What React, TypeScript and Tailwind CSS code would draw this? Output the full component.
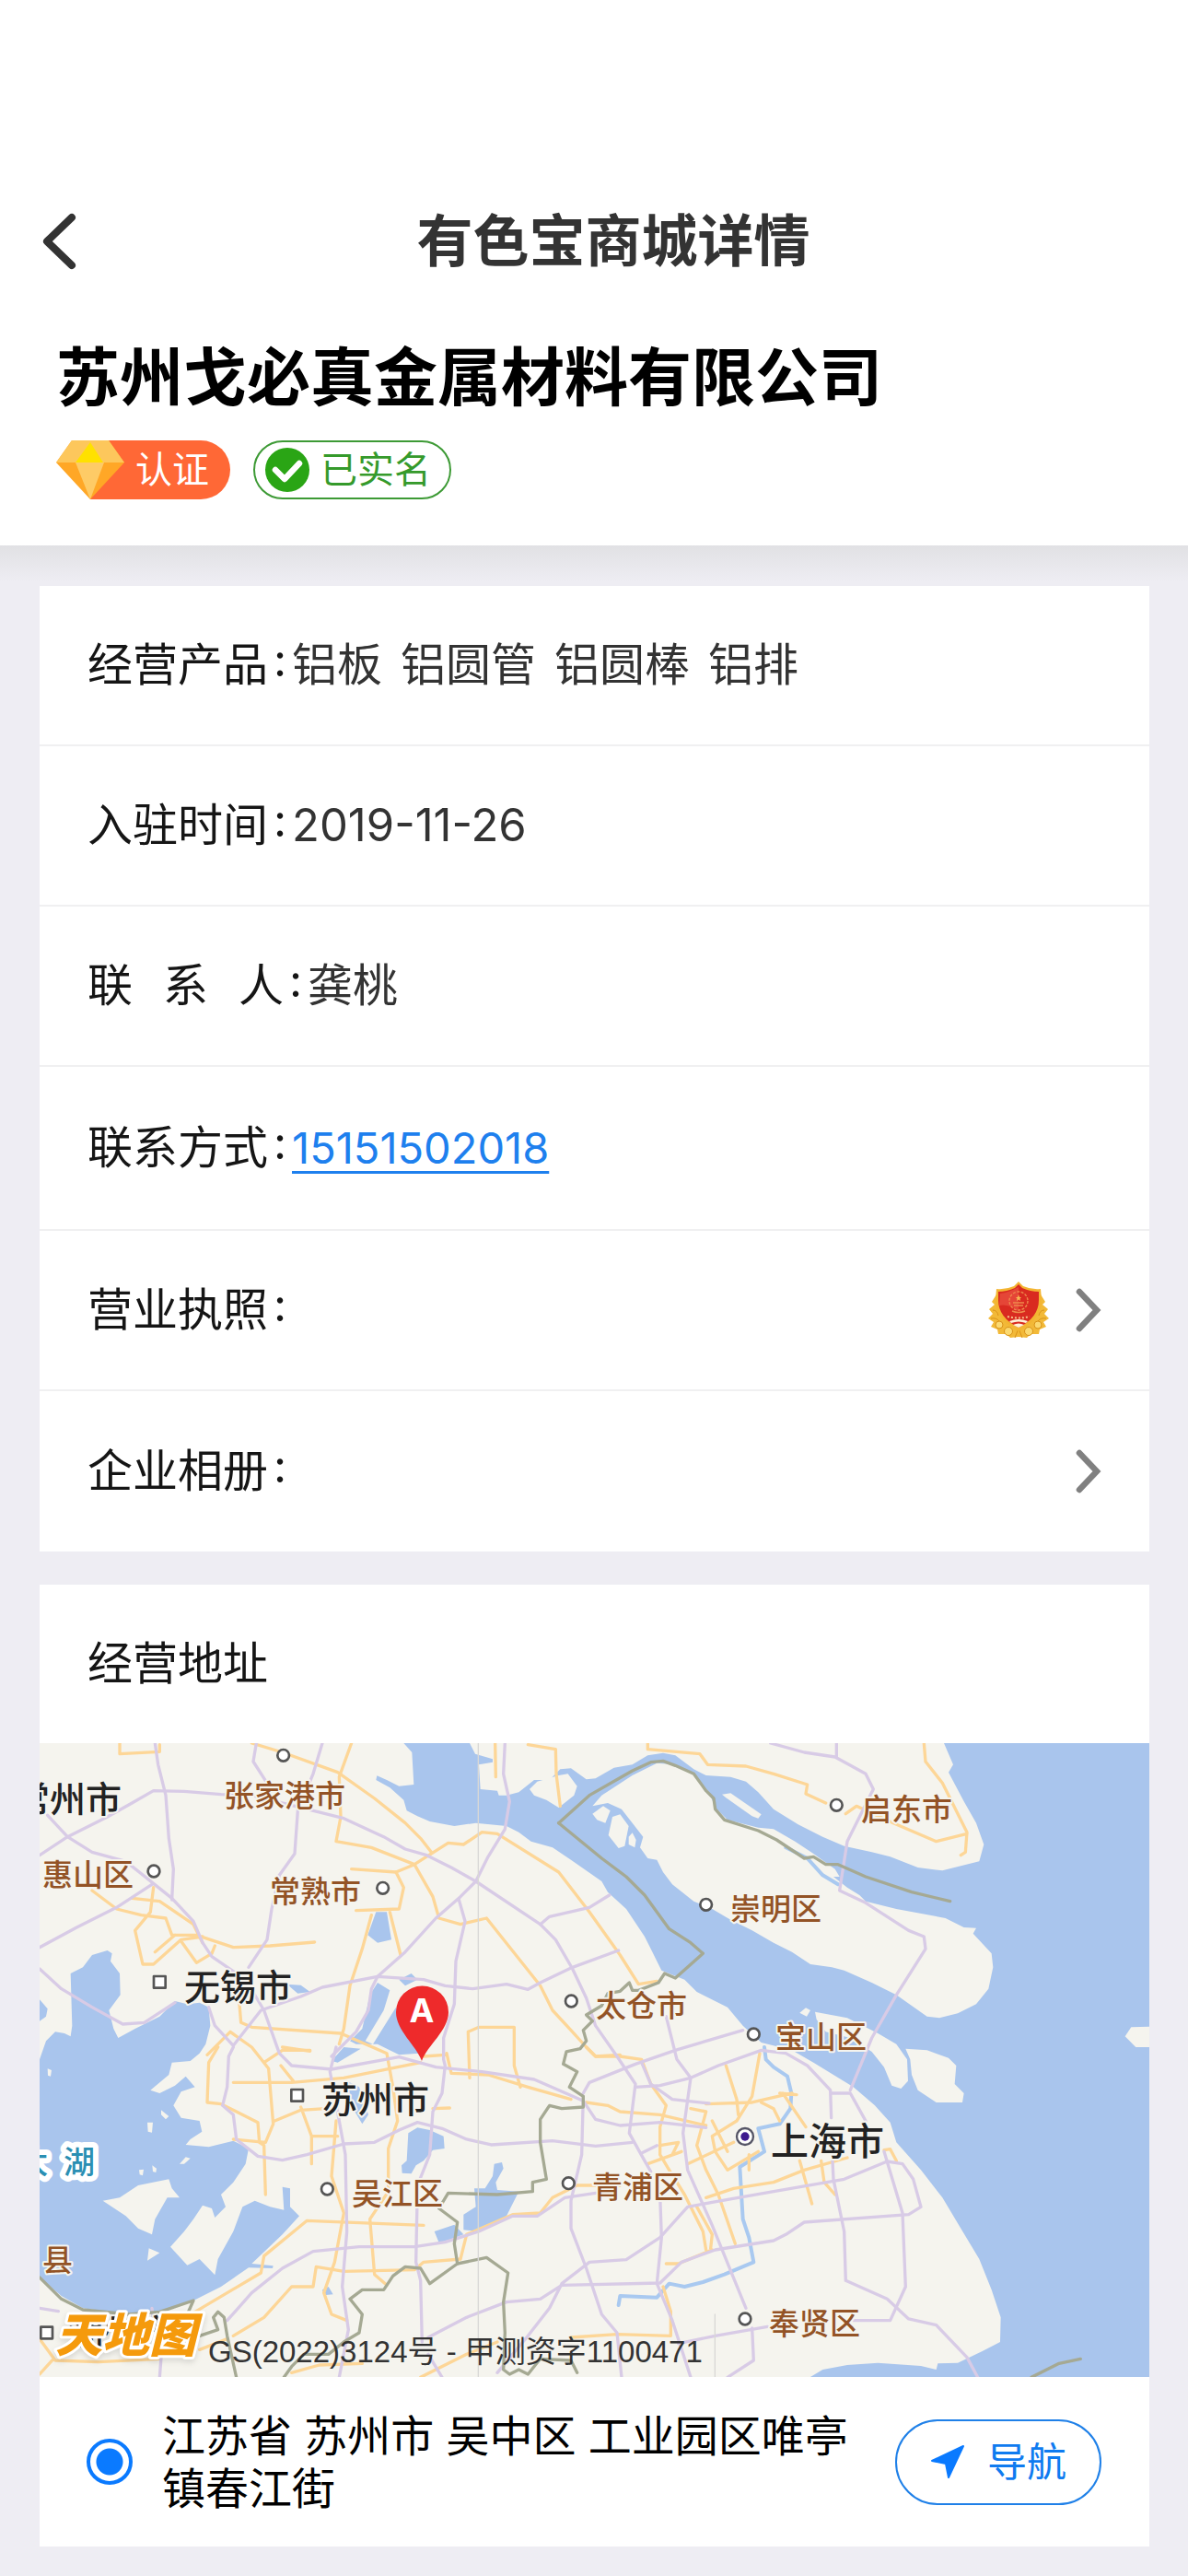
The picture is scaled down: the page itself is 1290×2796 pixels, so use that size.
import type { ReactNode } from "react";

type MapPath = { x: number; y: number; d: string };

// The map is drawn tile by tile, every tile is 1200x1020 units and has its own origin.
const WATER: MapPath[] = [
  // Yangtze estuary and the sea
  {
    x: 1200,
    y: 0,
    d: "M-5 30 22 60 28 165 -20 170 -60 150 -92 136 -95 150 -50 175 -5 215 5 250 40 268 80 285 160 300 230 290 330 300 370 320 410 350 480 370 540 410 640 480 660 515 720 570 780 660 800 700 835 770 910 800 950 840 1050 890 1100 950 1160 1005 1260 1030 1330 1070 1460 1150 1530 1210 1580 1265 1600 1330 1680 1420 1750 1510 1810 1610 1870 1710 1910 1810 1940 1900 1938 1980 1880 2010 1800 2048 1735 2050 1730 2070 1680 2058 1540 2048 1440 2055 1360 2070 1310 2100 2430 2100 2430 30 1755 30 1785 100 1770 125 1820 220 1860 290 1885 360 1870 415 1810 430 1750 445 1670 435 1580 400 1520 385 1430 365 1360 335 1280 295 1200 245 1150 190 1110 155 1060 140 980 135 940 115 880 70 840 62 790 70 740 100 680 110 620 145 590 148 540 112 505 115 470 150 420 150 370 190 330 200 305 200 300 185 245 180 240 100 285 92 285 82 228 65 210 30Z",
  },
  // Taihu
  {
    x: 0,
    y: 0,
    d: "M230 705 245 715 240 740 270 780 272 850 235 900 250 960 265 990 320 960 400 920 450 870 490 880 530 875 560 890 565 950 550 1010 530 1040 500 1065 440 1070 430 1110 370 1160 400 1170 450 1145 485 1115 515 1150 470 1165 445 1210 470 1250 530 1260 538 1295 500 1320 485 1338 560 1345 640 1325 690 1350 680 1400 640 1460 600 1500 615 1540 580 1575 570 1545 540 1535 510 1580 480 1620 435 1670 490 1730 530 1710 580 1762 590 1710 640 1620 670 1540 710 1520 760 1540 805 1550 800 1475 825 1480 825 1540 855 1570 800 1630 700 1725 770 1732 768 1740 690 1738 600 1800 500 1850 400 1880 300 1890 150 1870 80 1830 9 1770 9 1060 30 1000 60 970 90 975 110 985 115 950 110 780 150 760 180 720Z",
  },
  { x: 0, y: 0, d: "M9 865 35 895 30 920 9 935Z" },
  { x: 0, y: 0, d: "M1105 580 1140 580 1155 670 1110 680 1078 655Z" },
  { x: 0, y: 0, d: "M815 815 860 818 890 840 850 845Z" },
  // Yangcheng lake
  { x: 0, y: 0, d: "M1085 850 1110 810 1150 835 1130 900 1070 1000 1095 1010 1170 890 1200 960 1245 1040 1180 1045 1110 1010 1040 1010 1020 1000 1060 960Z" },
  { x: 0, y: 0, d: "M960 1065 1000 1020 1055 1025 980 1070ZM1180 800 1220 780 1240 800 1200 820Z" },
  { x: 1200, y: 1020, d: "M10 280 40 262 80 270 125 290 128 330 90 335 60 370 35 385 20 412 -10 410 -12 385 5 370Z" },
  { x: 1200, y: 1020, d: "M290 380 315 375 320 395 295 440 300 465 370 470 345 520 330 550 240 600 190 595 190 545 230 520 225 460 260 460 285 420Z" },
  { x: 1200, y: 1020, d: "M95 600 160 578 190 610 150 625 110 637Z" },
  { x: 0, y: 1020, d: "M1010 110 1050 130 1080 220 1060 250 1030 200ZM930 790 950 780 965 805 935 808Z" },
];

const ISLANDS: MapPath[] = [
  { x: 1200, y: 0, d: "M405 180 430 155 500 135 530 130 560 170 550 200 500 240 460 215 420 200Z" },
  // Chongming
  {
    x: 1200,
    y: 0,
    d: "M610 235 640 200 740 135 820 95 880 100 940 130 990 190 1010 240 1050 280 1150 305 1200 310 1270 350 1330 390 1400 440 1415 465 1395 465 1440 500 1480 525 1500 545 1600 570 1760 600 1820 630 1860 632 1850 650 1910 715 1915 760 1900 830 1860 880 1800 910 1740 925 1700 920 1600 850 1520 810 1430 770 1390 760 1320 750 1260 710 1200 680 1130 640 1060 605 1000 570 940 545 870 490 840 450 820 410 790 405 765 370 775 335 740 290 705 245 660 225Z",
  },
  { x: 1200, y: 0, d: "M610 260 645 235 668 250 652 290 625 280Z" },
  { x: 1200, y: 0, d: "M675 270 700 262 728 300 715 365 695 372 662 330Z" },
  { x: 1200, y: 0, d: "M740 322 752 345 748 370 728 360 728 335Z" },
  { x: 1200, y: 0, d: "M1032 197 1060 193 1160 262 1150 275 1130 268 1045 208Z" },
  // Changxing and Hengsha
  { x: 2400, y: 0, d: "M135 905 240 925 340 975 400 1010 435 1060 438 1130 415 1155 385 1145 360 1085 320 1035 250 990 170 970 140 930Z" },
  { x: 2400, y: 1020, d: "M430 5 500 10 570 35 595 60 590 120 620 150 615 180 530 180 470 140 450 90 445 40Z" },
  { x: 2400, y: 0, d: "M85 908 105 892 120 900 108 920Z" },
  { x: 2400, y: 0, d: "M1145 985 1165 955 1230 953 1230 1020 1180 1020Z" },
  // Taihu islets
  { x: 0, y: 1020, d: "M215 500 270 490 330 450 430 430 440 460 465 490 425 490 385 560 375 610 330 590 290 550Z" },
  { x: 0, y: 1020, d: "M360 245 378 245 375 278 362 275ZM405 205 430 225 420 235 405 220ZM465 380 485 358 500 362 480 380Z" },
  { x: 0, y: 1020, d: "M333 400 348 398 345 418 335 415ZM376 385 390 395 388 408 378 405ZM360 695 365 655 400 670ZM35 70 48 75 45 95 36 92Z" },
];

const RIVERS: MapPath[] = [
  { x: 1200, y: 1020, d: "M1170 0 1175 40 1200 65 1245 95 1258 150 1255 200 1220 250 1150 265 1170 340 1090 390 1100 560 1120 620 1135 700 1040 740 970 765 910 780 860 770 820 815 700 810 695 840" },
  { x: 2400, y: 0, d: "M40 370 110 405 160 460 210 490" },
];

const EXPRESSWAYS: MapPath[] = [
  { x: 0, y: 0, d: "M385 30 395 100 420 200 430 340 445 440 440 540" },
  { x: 0, y: 0, d: "M9 395 100 335 230 270 310 225 380 185 480 187 600 197 700 200 880 245 1000 275 1130 335 1200 375 1270 395 1350 435 1430 480 1640 620 1690 670 1745 765 1790 860 1820 950 1890 1050 1950 1140 1930 1300 1980 1390 2000 1425" },
  { x: 0, y: 0, d: "M35 265 100 335 180 385 290 415 440 535 510 610 540 680 570 725 680 800 740 900 790 1040 830 1080 960 1092 1180 1052 1300 1085 1450 1100 1620 1125 1780 1195 1820 1255 1900 1275 2030 1265 2180 1282" },
  { x: 0, y: 0, d: "M9 695 130 630 260 565 375 490M715 30 705 90 750 160M930 30 900 130 850 250 840 390 790 460 765 570 750 670 690 760" },
  { x: 0, y: 0, d: "M9 765 80 830 180 890 280 945 350 940 450 875" },
  { x: 0, y: 0, d: "M560 890 580 950 640 1015 730 900 860 855 930 825 1110 790 1260 800 1330 820 1420 830 1530 815 1600 832 1640 810 1745 760 1895 705" },
  { x: 0, y: 0, d: "M960 1050 1040 970 1080 900 1090 830 1110 790 1200 710 1300 600 1380 530 1430 480 1470 400 1525 310 1540 220 1520 130 1525 30" },
  { x: 1200, y: 0, d: "M175 540 195 610 165 740 160 880 125 990 125 1060 130 1080 120 1170 90 1230 80 1370 40 1470 35 1720 50 1780 55 1980M440 620 470 595 600 565 665 525" },
  { x: 0, y: 1020, d: "M640 0 625 30 620 130 605 190 640 220 650 300 720 355 800 368 880 350 1000 315 1100 310 1180 270 1240 245 1320 265 1400 300 1480 318 1680 305 1820 322 1940 310" },
  { x: 0, y: 1020, d: "M975 0 955 80 985 240 1005 350 1010 600 995 780 1015 920 985 1075" },
  { x: 0, y: 1020, d: "M620 890 700 800 800 720 900 665 1050 650 1230 650 1330 635 1440 600 1550 550 1630 550 1720 490 1820 475" },
  { x: 0, y: 1020, d: "M9 850 70 860M375 850 380 900M405 1010 400 1075" },
  { x: 1200, y: 1020, d: "M75 945 200 880 330 830 440 820 510 775 830 768 900 700 1010 660 1200 630 1240 610 1300 570 1640 545 1680 520 1655 430 1620 380 1570 372 1430 430 1200 470 1000 505 920 520 830 620 720 692 600 700 510 770 470 850 400 940 300 1060" },
  { x: 1200, y: 1020, d: "M580 160 575 350 540 500 540 590 590 720 640 870 690 930 705 1075M580 150 600 115 750 55 880 10 1100 -55" },
  { x: 1200, y: 1020, d: "M830 480 835 620 820 770 870 890 930 1075M850 -100 885 40 930 100 905 280 920 400 1000 580 1110 850M75 1000 120 1075" },
  { x: 1200, y: 1020, d: "M750 130 830 125 930 100 1020 60 1160 10 1240 20 1310 60 1385 140 1388 230M1392 370 1395 430 1430 600 1435 760 1570 820 1640 885 1730 905 1830 1010 1865 1075" },
  { x: 1200, y: 1020, d: "M770 50 800 120 870 170 990 183M770 345 820 320M890 965 1010 940 1180 910M1130 915 1135 1020 1050 1075" },
  { x: 2400, y: 1020, d: "M190 150 250 150 300 240M360 340 420 540 430 780 380 890 260 890" },
  { x: 2400, y: 0, d: "M-10 30 100 60 200 75 300 130 325 180 240 350 215 510 300 550 440 640 490 660 495 700 400 850 320 990 250 1160M205 30V75" },
];

const HIGHWAYS: MapPath[] = [
  { x: 0, y: 0, d: "M270 30V65L400 58V35M700 30 800 60 980 125 1100 210 1200 290 1250 340 1285 385" },
  { x: 0, y: 0, d: "M1025 30 985 140 990 270 975 350 1090 370 1230 425 1340 355 1390 360 1450 320 1500 325 1700 450 1800 580 1900 720 1960 815 2020 805" },
  { x: 0, y: 0, d: "M1025 440 1170 450 1230 425 1290 530 1310 600 1380 620 1465 600 1640 820 1680 900 1740 965 1790 1020 1820 1050 1900 1045" },
  { x: 0, y: 0, d: "M1170 450 1195 500 1180 570 1040 575M1090 590 1060 700 1020 820 1000 960 985 1010M1150 580 1185 720" },
  { x: 0, y: 0, d: "M180 510 260 570 340 590 420 600 440 655 520 655 640 695 760 690 905 678M310 535 400 545 510 620 540 680M380 500 370 580 320 640 345 750 380 750 470 670 540 660M385 710 450 655M470 675 520 745 570 715 580 690" },
  { x: 0, y: 0, d: "M660 880 665 940 700 955 990 975 1140 1040 1160 1150 1175 1260 1145 1350 1145 1490 1085 1580 1100 1760 1140 1795M800 1020 890 1033" },
  { x: 0, y: 1020, d: "M555 25 630 -50 700 0 755 70 770 250 745 310 640 300M590 0 560 50 555 180 600 185 720 245 725 310 740 320 745 480M640 115 830 115 1000 100 1250 50M740 50 800 10 890 10M795 60 835 110" },
  { x: 0, y: 1020, d: "M775 240 860 205 940 200M860 195 895 290 895 380M895 290 980 290M975 240 960 420 1000 540 970 700 935 800 960 870 1010 890" },
  { x: 0, y: 1020, d: "M640 940 740 880 830 780 900 780 910 715 1000 730 1230 725 1260 700 1380 690 1400 610 1550 545 1640 540 1680 490 1760 450 1900 450" },
  { x: 0, y: 1020, d: "M510 865 730 735 740 680 880 565 1260 580M9 950 60 1020 200 1025 400 1015M9 1065 50 1020M530 985 620 950M830 1060 920 1035 1060 1030" },
  { x: 1200, y: 1020, d: "M135 20 150 85 270 90 400 130 540 170M60 30 130 25M355 -65 355 60 375 130M210 100 205 -50 240 -65 355 -65M90 200 145 198" },
  { x: 1200, y: 1020, d: "M590 0 620 30 700 30 770 40 800 120 850 190 830 260 830 350 860 400 910 480 970 600 980 660M590 180 660 190 700 210 830 220 980 255" },
  { x: 1200, y: 1020, d: "M1045 60 1080 170 1085 220M1155 20 1130 160 1080 240 1000 290 1010 340 1050 400 1150 340M930 200 980 210 950 320 980 400 1020 480 1075 640M980 185 1130 180 1260 150" },
  { x: 1200, y: 1020, d: "M1160 180 1200 200 1220 240M830 320 890 310 870 350M790 380 900 340M920 380 1070 310M1000 240 1050 340M950 520 1000 610 995 655M1120 350 1120 400" },
  { x: 1200, y: 1020, d: "M980 490 1070 460 1200 440 1300 400 1440 360M850 705 890 705 1000 660M840 780 865 860 865 940 690 935 540 945M50 1075 200 1000 300 960" },
  { x: 2400, y: 1020, d: "M85 370 125 510M155 370 165 440 200 480M30 150 105 260M360 335 380 332 400 370M20 150 75 155" },
  { x: 1200, y: 0, d: "M790 30 790 50 960 65 985 100 1110 105 1200 130 1310 165 1305 195 1370 225M1435 260 1470 235 1590 290 1730 350 1830 325M1690 30 1695 90 1750 160 1830 320 1825 385 1810 395" },
  { x: 1200, y: 0, d: "M293 30 295 140M400 35 490 50 492 130 505 235" },
];

const BORDERS: MapPath[] = [
  { x: 1200, y: 0, d: "M500 290 600 200 740 120 800 92 840 88 880 103 940 130 980 185 1005 210 1010 245 1040 280 1150 315 1210 345 1300 405 1330 400 1370 425 1410 425 1500 465 1650 515 1775 545" },
  {
    x: 1200,
    y: 0,
    d: "M500 290 640 405 720 465 780 525 860 635 930 680 970 715 880 795 845 780 825 810 760 835 740 835 730 810 700 838 660 845 640 885 590 915 610 935 580 965 590 1000 570 1025 525 1035 515 1075 560 1100 535 1150 580 1180 580 1215 510 1220 470 1210 440 1255 440 1330 460 1450 415 1460 415 1490 300 1500 140 1495 110 1545 170 1590 160 1660 170 1725 80 1790 50 1740 0 1735 -40 1765 -70 1810 -140 1810 -180 1840 -140 1890 -150 1950 -200 1980 -250 2020 -330 2020 -370 2060 -395 2095",
  },
  { x: 1200, y: 1020, d: "M170 705 265 685 335 735 320 830 325 930 320 1050 340 1065 370 1050 400 1065 440 1015 540 1020 560 1060" },
  { x: 0, y: 1020, d: "M9 750 80 820 150 855 300 870 400 862 510 825 490 870M530 940 590 920 575 880 590 862 610 880 620 940 650 1075" },
  { x: 2400, y: 1020, d: "M840 1075 930 1030 1000 1015" },
];

const LABELS = [
  { text: "常州市", x: -25, y: 85, kind: "city" },
  { text: "无锡市", x: 160, y: 289, kind: "city" },
  { text: "苏州市", x: 309, y: 411, kind: "city" },
  { text: "上海市", x: 797, y: 457, kind: "capital" },
  { text: "湖州市", x: 33, y: 664, kind: "city" },
  { text: "张家港市", x: 203, y: 79, kind: "district" },
  { text: "惠山区", x: 6, y: 165, kind: "district" },
  { text: "常熟市", x: 253, y: 183, kind: "district" },
  { text: "启东市", x: 895, y: 94, kind: "district" },
  { text: "崇明区", x: 753, y: 202, kind: "district" },
  { text: "太仓市", x: 607, y: 307, kind: "district" },
  { text: "宝山区", x: 802, y: 341, kind: "district" },
  { text: "吴江区", x: 342, y: 511, kind: "district" },
  { text: "青浦区", x: 603, y: 504, kind: "district" },
  { text: "奉贤区", x: 795, y: 652, kind: "district" },
  { text: "县", x: 6, y: 583, kind: "district" },
  { text: "太", x: -22, y: 477, kind: "lake" },
  { text: "湖", x: 29, y: 477, kind: "lake" },
];

const LABEL_STYLES: Record<string, string> = {
  capital: "fill-[#222222] stroke-[#f5f4ee] stroke-[4px] text-[41px] font-medium",
  city: "fill-[#222222] stroke-[#f5f4ee] stroke-[4px] text-[39px] font-medium",
  district: "fill-[#935326] stroke-[#f5f4ee] stroke-[4px] text-[33px] font-medium",
  lake: "fill-[#2a8fb3] stroke-white stroke-[12px] text-[34px] font-medium",
};

const DISTRICT_DOTS = [
  [803, 70],
  [381, 447],
  [1127, 502],
  [1741, 870],
  [2180, 556],
  [2605, 232],
  [2335, 978],
  [946, 1482],
  [1732, 1463],
  [2307, 1905],
];

const CITY_DOTS = [
  [400, 808],
  [848, 1177],
  [32, 1950],
];

function Layer({ paths, className }: { paths: MapPath[]; className: string }) {
  return (
    <g className={className}>
      {paths.map((path) => (
        <path key={path.d} d={path.d} transform={`translate(${path.x} ${path.y})`} />
      ))}
    </g>
  );
}

function AddressMap() {
  return (
    <svg viewBox="3 10 1205 688" className="block w-full" role="img" aria-label="经营地址">
      <rect x="3" y="10" width="1205" height="688" className="fill-[#f5f4ee]" />
      <g transform="scale(0.33333)" strokeLinejoin="round" strokeLinecap="round">
        <Layer paths={WATER} className="fill-[#a9c5ed]" />
        <Layer paths={ISLANDS} className="fill-[#f5f4ee]" />
        <Layer paths={RIVERS} className="fill-none stroke-[#a9c9f0] stroke-[12px]" />
        <Layer paths={HIGHWAYS} className="fill-none stroke-[#fdd697] stroke-[10px]" />
        <Layer paths={EXPRESSWAYS} className="fill-none stroke-[#d8cbe6] stroke-[10px]" />
        <Layer paths={BORDERS} className="fill-none stroke-[#a5a993] stroke-[10px]" />
        <path d="M1438 30V2095M2209 1890V2095" className="fill-none stroke-[#d9d8d6] stroke-[4px]" />

        {DISTRICT_DOTS.map(([x, y]) => (
          <circle key={`${x}-${y}`} cx={x} cy={y} r="19" className="fill-white stroke-[#555555] stroke-[8px]" />
        ))}
        {CITY_DOTS.map(([x, y]) => (
          <rect key={`${x}-${y}`} x={x - 19} y={y - 19} width="38" height="38" className="fill-white stroke-[#555555] stroke-[8px]" />
        ))}
        <circle cx="2307" cy="1311" r="27" className="fill-white stroke-[#555566] stroke-[7px]" />
        <circle cx="2307" cy="1311" r="14" className="fill-[#3d1a8f]" />
      </g>

      {LABELS.map((label) => (
        <text key={`${label.text}-${label.x}`} x={label.x} y={label.y} paintOrder="stroke" strokeLinejoin="round" className={LABEL_STYLES[label.kind]}>
          {label.text}
        </text>
      ))}

      <path d="M418 355C412 338 390 322 390 302A28 28 0 1 1 447 302C447 322 424 338 418 355Z" className="fill-[#ee2a2b]" />
      <text x="418" y="313" textAnchor="middle" className="fill-white text-[36px] font-bold">
        A
      </text>

      <text x="20" y="671" paintOrder="stroke" strokeLinejoin="round" className="fill-[#f59a0c] stroke-white stroke-[6px] text-[51px] font-black italic drop-shadow-md">
        天地图
      </text>
      <text x="186" y="682" className="fill-[#333333] font-['Liberation_Sans','Noto_Sans_CJK_SC',sans-serif] text-[33px]">
        GS(2022)3124号 - 甲测资字1100471
      </text>
    </svg>
  );
}

function GemIcon() {
  return (
    <svg viewBox="0 0 74 64" className="h-16 w-[74px]" aria-hidden="true">
      <path d="M17 0H57L74 24 37 64 0 24Z" fill="#ffa726" />
      <path d="M17 0H57L74 24H0Z" fill="#fdc75c" />
      <path d="M37 2 51 24H21Z" fill="#ffe100" />
      <path d="M21 24H52L37 64Z" fill="#fecb66" />
    </svg>
  );
}

function CheckIcon() {
  return (
    <svg viewBox="0 0 48 48" className="size-12" aria-hidden="true">
      <circle cx="24" cy="24" r="24" fill="#2aa515" />
      <path d="M11 24 21 34 37 17" fill="none" stroke="#fff" strokeWidth="6.5" strokeLinejoin="round" strokeLinecap="round" />
    </svg>
  );
}

function EmblemIcon() {
  return (
    <svg viewBox="0 0 66 62" className="h-[62px] w-[66px]" aria-hidden="true">
      <path d="M9 14 4 22 7 25 1 30 5 35 0 40 6 44 3 49 10 52 11 57 20 57 24 61 33 60 42 61 46 57 55 57 56 52 63 49 60 44 66 40 61 35 65 30 59 25 62 22 57 14Z" fill="#f2b938" />
      <g fill="#fbd970" stroke="#d99218" strokeWidth="1">
        <circle cx="22" cy="54" r="4.5" />
        <circle cx="44" cy="54" r="4.5" />
        <circle cx="12" cy="47" r="4" />
        <circle cx="54" cy="47" r="4" />
        <path d="M5 31Q10 31 11 37M3 40Q9 39 12 43M61 31Q56 31 55 37M63 40Q57 39 54 43M29 61 33 51 37 61" fill="none" />
      </g>
      <path d="M33 0 38 5Q47 9 57 8L58 20Q58 41 33 54Q8 41 8 20L9 8Q19 9 28 5Z" fill="#f3b532" />
      <path d="M33 3 37 7Q46 11 55 11L55 20Q55 39 33 50Q11 39 11 20V11Q20 11 29 7Z" fill="#d92a20" />
      <path d="M13 13Q22 12 33 6V32Q22 24 12 26Z" fill="#ec5a48" opacity="0.6" />
      <g fill="none" stroke="#ee8a4c" strokeWidth="1.4">
        <circle cx="33" cy="21" r="10" strokeDasharray="3 1.5" />
        <path d="M27 23H39M28 26H38M26 32Q33 35 40 32" />
      </g>
      <path d="M33 14 34 17H36L34.5 18.500 35 21 33 19.500 31 21 31.500 18.500 30 17H32Z" fill="#f7b955" />
      <path d="M21 38Q33 41 45 38" fill="none" stroke="#f6c08a" strokeWidth="2" strokeDasharray="2 2" />
      <path d="M23 43Q33 39 43 43L41 45Q33 42 25 45Z" fill="#fff3d8" />
      <path d="M27 47Q33 44 39 47L33 50Z" fill="#fff3d8" />
    </svg>
  );
}

function ArrowIcon() {
  return (
    <svg viewBox="0 0 28 48" className="h-12 w-7" aria-hidden="true">
      <path d="M4 4 23 24 4 44" fill="none" stroke="#808080" strokeWidth="6.5" strokeLinecap="round" strokeLinejoin="miter" />
    </svg>
  );
}

function Row({ label, tall, children }: { label: ReactNode; tall?: boolean; children?: ReactNode }) {
  return (
    <div className={`flex items-center border-b-2 border-[#f0f0f1] px-[52px] last:border-b-0 ${tall ? "h-[178px]" : "h-[174px]"}`}>
      <dt className="flex text-[#151515]">
        {label}
        <span className="w-[26px] text-center">∶</span>
      </dt>
      <dd className="flex flex-1 items-center">{children}</dd>
    </div>
  );
}

export default function App() {
  return (
    <div className="flex min-h-screen flex-col bg-[#eeedf3] font-['Inter','Noto_Sans_CJK_SC',sans-serif] text-[49px] leading-[72px] text-[#333333]">
      <header className="bg-white pt-[200px] pb-[50px]">
        <div className="flex h-[124px] items-center pr-11">
          <button type="button" aria-label="返回" className="pl-11">
            <svg viewBox="0 0 42 64" className="h-16 w-[42px]" aria-hidden="true">
              <path d="M34 6 7 32 34 58" fill="none" stroke="#333" strokeWidth="8" strokeLinecap="round" strokeLinejoin="round" />
            </svg>
          </button>
          <h1 className="flex-1 text-center text-[61px] font-bold">有色宝商城详情</h1>
        </div>

        <div className="px-[61px] pt-9">
          <h2 className="text-[69px] leading-[100px] font-bold text-black">苏州戈必真金属材料有限公司</h2>
          <div className="mt-[18px] flex gap-[25px] text-[40px] leading-[60px]">
            <div className="flex h-16 items-center rounded-r-full bg-[linear-gradient(to_right,transparent_37px,#ff6836_37px)] pr-[23px]">
              <GemIcon />
              <span className="ml-3 text-white">认证</span>
            </div>
            <div className="flex h-16 items-center gap-3 rounded-full border-2 border-[#3d9a35] pr-5 pl-[11px] text-[#359a2b]">
              <CheckIcon />
              已实名
            </div>
          </div>
        </div>
      </header>

      <main className="flex-1 bg-[linear-gradient(to_bottom,#e1e1e4,#eeedf3_40px)] pt-11 pr-[42px] pl-[43px]">
        <dl className="bg-white">
          <Row label="经营产品">
            <span className="flex gap-5">
              <span>铝板</span>
              <span>铝圆管</span>
              <span>铝圆棒</span>
              <span>铝排</span>
            </span>
          </Row>
          <Row label="入驻时间">2019-11-26</Row>
          <Row
            label={
              <span className="flex gap-[33px]">
                <span>联</span>
                <span>系</span>
                <span>人</span>
              </span>
            }
          >
            龚桃
          </Row>
          <Row label="联系方式" tall>
            <a href="tel:15151502018" className="text-[47px] text-[#1e80ee] underline decoration-[3px] underline-offset-8">
              15151502018
            </a>
          </Row>
          <Row label="营业执照">
            <button type="button" aria-label="查看营业执照" className="ml-auto flex items-center gap-[29px]">
              <EmblemIcon />
              <ArrowIcon />
            </button>
          </Row>
          <Row label="企业相册">
            <button type="button" aria-label="查看企业相册" className="ml-auto">
              <ArrowIcon />
            </button>
          </Row>
        </dl>

        <section className="mt-9 bg-white">
          <h3 className="px-[52px] py-[50px] text-[#151515]">经营地址</h3>
          <AddressMap />
          <div className="flex items-center py-[35px] pr-[52px] pl-[51px]">
            <input
              type="radio"
              name="address"
              defaultChecked
              aria-label="江苏省 苏州市 吴中区 工业园区唯亭镇春江街"
              className="size-[50px] shrink-0 appearance-none rounded-full border-4 border-[#0a7aff] bg-[radial-gradient(circle,#0a7aff_14px,transparent_15px)]"
            />
            <p className="ml-8 w-[752px] text-[47px] leading-[57px] text-black">江苏省 苏州市 吴中区 工业园区唯亭镇春江街</p>
            <button
              type="button"
              className="ml-auto flex h-[93px] w-[224px] items-center justify-center gap-6 rounded-full border-2 border-[#1f80e8] text-[43px] text-[#0f7bf0]"
            >
              <svg viewBox="0 0 38 38" className="size-[38px]" aria-hidden="true">
                <path d="M36 2 20 36 17 21 2 18Z" fill="#0a7aff" stroke="#0a7aff" strokeWidth="2" strokeLinejoin="round" />
              </svg>
              导航
            </button>
          </div>
        </section>
      </main>
    </div>
  );
}
